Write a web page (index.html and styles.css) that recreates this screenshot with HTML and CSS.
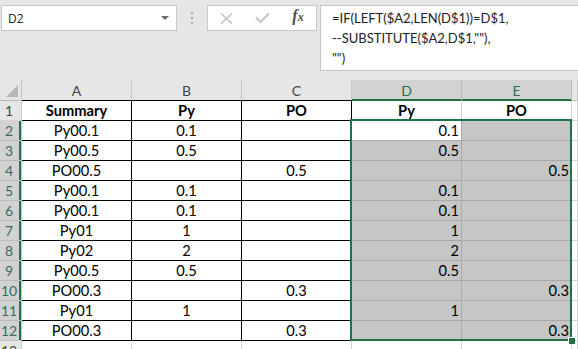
FILE: index.html
```html
<!DOCTYPE html>
<html>
<head>
<meta charset="utf-8">
<link rel="stylesheet" href="styles.css">
</head>
<body>
<div class="app">
  <div class="fbar">
    <div class="namebox"><span class="ref">D2</span><span class="drop"></span></div>
    <div class="dots"><i></i><i></i><i></i></div>
    <div class="fxbox">
      <span class="ico"><svg width="13" height="11" viewBox="0 0 13 11"><path d="M1 0.5 L12 10.5 M12 0.5 L1 10.5" stroke="#bdbdbd" stroke-width="1.4" fill="none"/></svg></span>
      <span class="ico"><svg width="15" height="12" viewBox="0 0 15 12"><path d="M1 5.5 L5.5 10 L14 1.5" stroke="#c4c4c4" stroke-width="2" fill="none"/></svg></span>
      <span class="ico fx"><span class="f">f</span><span class="x">x</span></span>
    </div>
    <div class="formula">
      <div>=IF(LEFT($A2,LEN(D$1))=D$1,</div>
      <div>--SUBSTITUTE($A2,D$1,""),</div>
      <div>"")</div>
    </div>
  </div>
  <div class="sheet">
    <div class="corner"><span class="tri"></span></div>
    <div class="ch bk">A</div><div class="ch bk">B</div><div class="ch bk">C</div><div class="ch sel">D</div><div class="ch sel">E</div><div class="ch"></div>

    <div class="rh">1</div><div class="c b bold">Summary</div><div class="c b bold">Py</div><div class="c b bold">PO</div><div class="c bold">Py</div><div class="c bold">PO</div><div class="c"></div>

    <div class="rh sel">2</div><div class="c b">Py00.1</div><div class="c b">0.1</div><div class="c b"></div><div class="c s act n">0.1</div><div class="c s n"></div><div class="c"></div>
    <div class="rh sel">3</div><div class="c b">Py00.5</div><div class="c b">0.5</div><div class="c b"></div><div class="c s n">0.5</div><div class="c s n"></div><div class="c"></div>
    <div class="rh sel">4</div><div class="c b">PO00.5</div><div class="c b"></div><div class="c b">0.5</div><div class="c s n"></div><div class="c s n">0.5</div><div class="c"></div>
    <div class="rh sel">5</div><div class="c b">Py00.1</div><div class="c b">0.1</div><div class="c b"></div><div class="c s n">0.1</div><div class="c s n"></div><div class="c"></div>
    <div class="rh sel">6</div><div class="c b">Py00.1</div><div class="c b">0.1</div><div class="c b"></div><div class="c s n">0.1</div><div class="c s n"></div><div class="c"></div>
    <div class="rh sel">7</div><div class="c b">Py01</div><div class="c b">1</div><div class="c b"></div><div class="c s n">1</div><div class="c s n"></div><div class="c"></div>
    <div class="rh sel">8</div><div class="c b">Py02</div><div class="c b">2</div><div class="c b"></div><div class="c s n">2</div><div class="c s n"></div><div class="c"></div>
    <div class="rh sel">9</div><div class="c b">Py00.5</div><div class="c b">0.5</div><div class="c b"></div><div class="c s n">0.5</div><div class="c s n"></div><div class="c"></div>
    <div class="rh sel">10</div><div class="c b">PO00.3</div><div class="c b"></div><div class="c b">0.3</div><div class="c s n"></div><div class="c s n">0.3</div><div class="c"></div>
    <div class="rh sel">11</div><div class="c b">Py01</div><div class="c b">1</div><div class="c b"></div><div class="c s n">1</div><div class="c s n"></div><div class="c"></div>
    <div class="rh sel">12</div><div class="c b">PO00.3</div><div class="c b"></div><div class="c b">0.3</div><div class="c s n"></div><div class="c s n">0.3</div><div class="c"></div>

    <div class="rh">13</div><div class="c"></div><div class="c"></div><div class="c"></div><div class="c"></div><div class="c"></div><div class="c"></div>

    <div class="selbox"><span class="handle"></span></div>
  </div>
</div>
</body>
</html>
```

FILE: styles.css
```css
html, body {
  margin: 0;
  padding: 0;
  background: #ffffff;
}
.app {
  width: 578px;
  height: 349px;
  overflow: hidden;
  font-family: Lato, "Liberation Sans", sans-serif;
}
.fbar {
  height: 80px;
  box-sizing: border-box;
  padding: 5px 0 0 1px;
  background: #e6e6e6;
  display: flex;
  align-items: flex-start;
}
.namebox {
  width: 176px;
  height: 26px;
  box-sizing: border-box;
  background: #fff;
  border: 1px solid #c6c6c6;
  display: flex;
  align-items: center;
  justify-content: space-between;
  padding: 0 7px 0 6px;
  font-family: "Open Sans", sans-serif;
  font-size: 12px;
  color: #222;
}
.drop {
  width: 0;
  height: 0;
  border-left: 4px solid transparent;
  border-right: 4px solid transparent;
  border-top: 4px solid #6b6b6b;
  margin-top: -1px;
}
.dots {
  width: 30px;
  height: 26px;
  display: flex;
  flex-direction: column;
  align-items: center;
  justify-content: center;
  gap: 3px;
}
.dots i {
  display: block;
  width: 2px;
  height: 2px;
  background: #a8a8a8;
}
.fxbox {
  width: 110px;
  height: 26px;
  box-sizing: border-box;
  background: #fff;
  border: 1px solid #c6c6c6;
  display: flex;
  align-items: center;
}
.ico {
  width: 36px;
  height: 24px;
  display: flex;
  align-items: center;
  justify-content: center;
}
.fx {
  font-family: "Liberation Serif", serif;
  font-style: italic;
  font-weight: bold;
  color: #4f4f4f;
  align-items: baseline;
  padding-top: 1px;
  box-sizing: border-box;
}
.fx .f { font-size: 16px; }
.fx .x { font-size: 12px; }
.formula {
  margin-left: 3px;
  flex: 1;
  height: 66px;
  box-sizing: border-box;
  background: #fff;
  border: 1px solid #c6c6c6;
  border-right: none;
  padding: 2px 0 0 11px;
  font-size: 13px;
  line-height: 20px;
  color: #222;
  white-space: nowrap;
}
.sheet {
  position: relative;
  display: grid;
  grid-template-columns: 22px repeat(5, 110px) 1fr;
  grid-template-rows: 21px repeat(12, 20px) 20px;
  font-size: 14.67px;
  color: #000;
}
.corner {
  position: relative;
  background: #e6e6e6;
  border-right: 1px solid #c6c6c6;
  border-bottom: 1px solid #b8b8b8;
}
.tri {
  position: absolute;
  right: 3px;
  bottom: 3px;
  width: 0;
  height: 0;
  border-left: 12px solid transparent;
  border-bottom: 12px solid #b7b7b7;
}
.ch {
  background: #e6e6e6;
  border-right: 1px solid #c6c6c6;
  border-bottom: 1px solid #b8b8b8;
  display: flex;
  align-items: center;
  justify-content: center;
  color: #444;
  font-size: 14px;
  padding-top: 1px;
}
.ch.bk {
  border-bottom-color: #000;
}
.ch.sel {
  background: #d2d2d2;
  color: #217346;
  border-right-color: #b8b8b8;
  border-bottom-color: #217346;
  box-shadow: inset 0 -1px #217346;
}
.rh {
  background: #e6e6e6;
  border-right: 1px solid #c6c6c6;
  border-bottom: 1px solid #d2d2d2;
  display: flex;
  align-items: center;
  justify-content: center;
  color: #444;
  font-size: 14px;
  padding-right: 3px;
}
.rh.sel {
  background: #d2d2d2;
  color: #3a6b57;
  border-bottom-color: #bcbcbc;
  box-shadow: inset -2px 0 #217346;
}
.c {
  border-right: 1px solid #d4d4d4;
  border-bottom: 1px solid #d4d4d4;
  display: flex;
  align-items: flex-end;
  justify-content: center;
  padding: 0 2px;
  line-height: 19px;
  white-space: nowrap;
  overflow: hidden;
}
.c.b {
  border-color: #000;
}
.c.bold {
  font-weight: bold;
}
.c.n {
  justify-content: flex-end;
}
.c.s {
  background: #c6c6c6;
  border-color: #a9a9a9;
}
.c.s.act {
  background: #fff;
}
.selbox {
  position: absolute;
  left: 350px;
  top: 39px;
  width: 222px;
  height: 222px;
  box-sizing: border-box;
  border: 2px solid #217346;
}
.handle {
  position: absolute;
  right: -5px;
  bottom: -5px;
  width: 6px;
  height: 6px;
  background: #217346;
  border-left: 1px solid #fff;
  border-top: 1px solid #fff;
}
```
